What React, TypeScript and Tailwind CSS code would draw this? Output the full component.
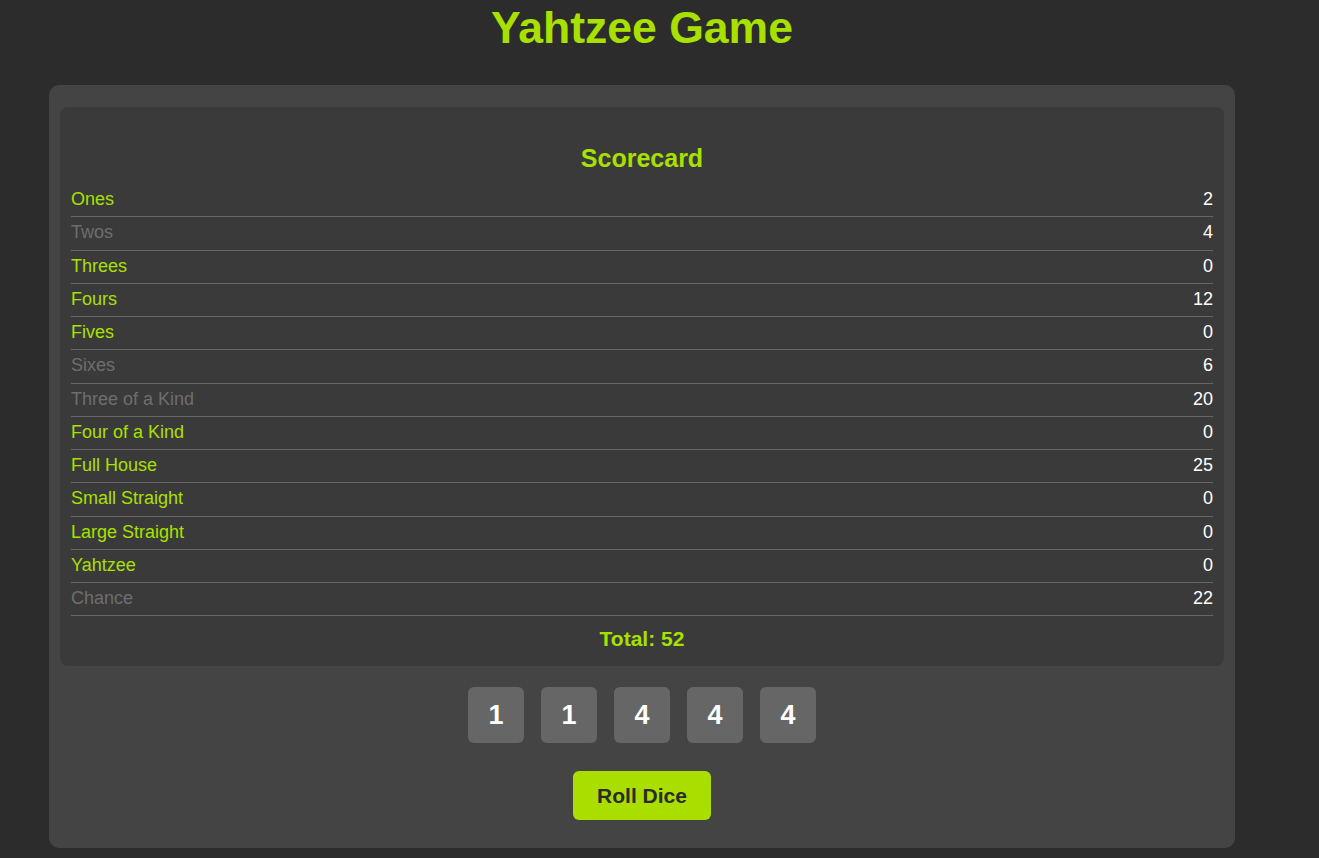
import React from 'react';

interface Row {
  name: string;
  score: number;
  used: boolean;
}

const rows: Row[] = [
  { name: 'Ones', score: 2, used: false },
  { name: 'Twos', score: 4, used: true },
  { name: 'Threes', score: 0, used: false },
  { name: 'Fours', score: 12, used: false },
  { name: 'Fives', score: 0, used: false },
  { name: 'Sixes', score: 6, used: true },
  { name: 'Three of a Kind', score: 20, used: true },
  { name: 'Four of a Kind', score: 0, used: false },
  { name: 'Full House', score: 25, used: false },
  { name: 'Small Straight', score: 0, used: false },
  { name: 'Large Straight', score: 0, used: false },
  { name: 'Yahtzee', score: 0, used: false },
  { name: 'Chance', score: 22, used: true },
];

const dice = [1, 1, 4, 4, 4];

export default function App() {
  return (
    <div className="min-h-[858px] bg-[#2c2c2c] pt-[3px] font-['Liberation_Sans',Arial,sans-serif]">
      <div className="w-[1284px]">
        <h1 className="text-center text-[44.5px] font-bold leading-[50px] text-[#a8e000]">
          Yahtzee Game
        </h1>
        <div className="mx-auto mt-[32px] w-[1186px] rounded-[10px] bg-[#444444] px-[11px] pt-[22px] pb-[28px]">
          <div className="rounded-[8px] bg-[#3a3a3a] px-[11px] pt-[11px] pb-[15px]">
            <h2 className="mt-[26px] mb-[11px] text-center text-[25px] font-bold leading-[29px] text-[#a8e000]">
              Scorecard
            </h2>
            <div>
              {rows.map((row) => (
                <div
                  key={row.name}
                  className="flex items-center justify-between border-b border-[#666666] pt-[5px] pb-[7px] text-[18px] leading-[20.25px]"
                >
                  <span className={row.used ? 'text-[#6e6e6e]' : 'text-[#a8e000]'}>
                    {row.name}
                  </span>
                  <span className="text-white">{row.score}</span>
                </div>
              ))}
            </div>
            <div className="mt-[11px] text-center text-[21px] font-bold leading-[24px] text-[#a8e000]">
              Total: 52
            </div>
          </div>
          <div className="mt-[21px] flex justify-center gap-[17px]">
            {dice.map((d, i) => (
              <div
                key={i}
                className="flex h-[56px] w-[56px] items-center justify-center rounded-[6px] bg-[#666666] text-[27px] font-bold text-white"
              >
                {d}
              </div>
            ))}
          </div>
          <div className="mt-[28px] flex justify-center">
            <button className="h-[49px] w-[138px] rounded-[6px] bg-[#aadd00] text-[21px] font-bold text-[#2b2b2b]">
              Roll Dice
            </button>
          </div>
        </div>
      </div>
    </div>
  );
}
